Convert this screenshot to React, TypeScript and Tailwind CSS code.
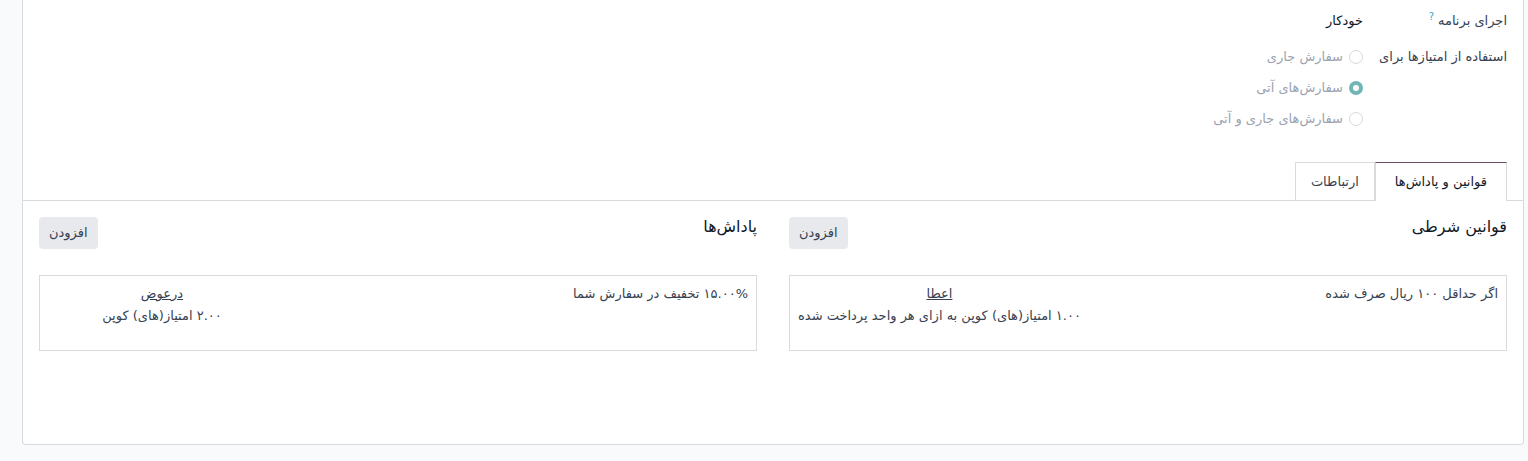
// Loyalty program form – rules & rewards tab (RTL / Persian)
import { useState } from "react";

type TabKey = "rules" | "comm";

const tabs: { key: TabKey; label: string }[] = [
  { key: "rules", label: "قوانین و پاداش‌ها" },
  { key: "comm", label: "ارتباطات" },
];

const applyOptions = [
  { key: "current", label: "سفارش جاری" },
  { key: "future", label: "سفارش‌های آتی" },
  { key: "both", label: "سفارش‌های جاری و آتی" },
];

export default function App() {
  const [activeTab, setActiveTab] = useState<TabKey>("rules");
  const [applyOn] = useState("future");

  return (
    <div
      dir="rtl"
      className="min-h-[461px] bg-[#f9fafb] font-['DejaVu_Sans',sans-serif] text-[13px] text-[#374151]"
    >
      <div className="ml-[22px] mr-[4px] rounded-b border-x border-b border-[#d8dadd] bg-white px-4 pb-[93px]">
        {/* top fields */}
        <div className="pt-[10px]">
          <div className="flex items-center leading-[21px]">
            <div className="w-[144px] shrink-0">
              اجرای برنامه
              <sup className="mr-1 text-[10px] text-[#3aa8c9]">?</sup>
            </div>
            <div className="text-[#111827]">خودکار</div>
          </div>

          <div className="mt-[15px] flex items-start">
            <div className="w-[144px] shrink-0 leading-[21px] text-[#374151]">
              استفاده از امتیازها برای
            </div>
            <div className="flex flex-col gap-[10px]">
              {applyOptions.map((opt) => (
                <label
                  key={opt.key}
                  className="flex items-center gap-[6px] leading-[21px] text-[#9ca3af]"
                >
                  {applyOn === opt.key ? (
                    <span className="h-[14px] w-[14px] rounded-full border-[4px] border-[#71b5b7] bg-white" />
                  ) : (
                    <span className="h-[14px] w-[14px] rounded-full border border-[#d8dadd] bg-white" />
                  )}
                  <span>{opt.label}</span>
                </label>
              ))}
            </div>
          </div>
        </div>

        {/* tabs */}
        <div className="-mx-4 mt-[33px] flex border-b border-[#d8dadd] pr-4">
          {tabs.map((tab) => (
            <button
              key={tab.key}
              onClick={() => setActiveTab(tab.key)}
              className={`-mb-px h-[39px] text-[13px] ${
                activeTab === tab.key
                  ? "border-x border-t border-[#d8dadd] border-t-[#714b67] bg-white px-[19px] text-[#111827]"
                  : "border border-[#d8dadd] bg-white px-[15px] text-[#374151]"
              }`}
            >
              {tab.label}
            </button>
          ))}
        </div>

        {/* rules & rewards */}
        <div className="mt-4 grid grid-cols-2 gap-8">
          <Section title="قوانین شرطی">
            <Card
              right="اگر حداقل ۱۰۰ ریال صرف شده"
              linkLabel="اعطا"
              detail="۱.۰۰ امتیاز(های) کوپن به ازای هر واحد پرداخت شده"
            />
          </Section>
          <Section title="پاداش‌ها">
            <Card
              right="۱۵.۰۰% تخفیف در سفارش شما"
              linkLabel="درعوض"
              detail="۲.۰۰ امتیاز(های) کوپن"
            />
          </Section>
        </div>
      </div>
    </div>
  );
}

function Section({
  title,
  children,
}: {
  title: string;
  children: React.ReactNode;
}) {
  return (
    <div>
      <div className="flex items-start justify-between">
        <h3 className="text-[16px] leading-[20px] text-[#111827]">{title}</h3>
        <button className="h-[32px] rounded bg-[#e7e9ed] px-[10px] text-[13px] text-[#374151]">
          افزودن
        </button>
      </div>
      <div className="mt-[26px]">{children}</div>
    </div>
  );
}

function Card({
  right,
  linkLabel,
  detail,
}: {
  right: string;
  linkLabel: string;
  detail: string;
}) {
  return (
    <div className="flex min-h-[76px] justify-between border border-[#d8dadd] bg-white px-2 pt-[7px] leading-[22px]">
      <div>{right}</div>
      <div className="min-w-[228px] text-center">
        <div>
          <a className="cursor-pointer underline">{linkLabel}</a>
        </div>
        <div>{detail}</div>
      </div>
    </div>
  );
}
